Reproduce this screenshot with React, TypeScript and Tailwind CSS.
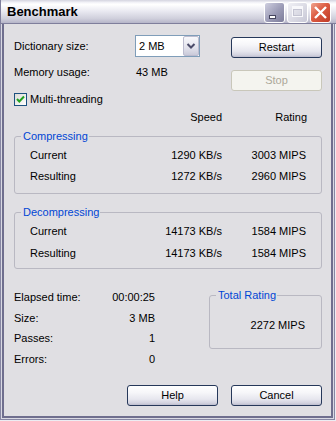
import React from "react";

interface XpButtonProps {
  label: string;
  disabled?: boolean;
  className?: string;
}

function XpButton({ label, disabled, className = "" }: XpButtonProps) {
  if (disabled) {
    return (
      <button className={"flex h-[21px] w-[91px] items-center justify-center rounded-[3px] border border-[#c9c7ba] bg-[#f4f4ef] text-[#aca899] " + className}>
        {label}
      </button>
    );
  }
  return (
    <button className={"flex h-[21px] w-[91px] items-center justify-center rounded-[3px] border border-[#26385a] bg-[linear-gradient(to_bottom,#ffffff_0%,#f6f6f9_35%,#e6e6ee_70%,#d2d2df_90%,#bcbccd_100%)] text-black " + className}>
      {label}
    </button>
  );
}

function GroupBox({ title, className = "", children }: { title: string; className?: string; children: React.ReactNode }) {
  return (
    <fieldset className={"rounded-[3px] border border-[#b9b8c2] " + className}>
      <legend className="ml-[6px] pl-[2px] pr-[1px] leading-[13px] text-[#0046d5]">{title}</legend>
      {children}
    </fieldset>
  );
}

function RateRow({ label, speed, rating }: { label: string; speed: string; rating: string }) {
  return (
    <div className="flex">
      <div className="flex-1 pl-[15px]">{label}</div>
      <div className="w-[100px] text-right">{speed}</div>
      <div className="w-[84px] text-right">{rating}</div>
    </div>
  );
}

function InfoRow({ label, value }: { label: string; value: string }) {
  return (
    <div className="flex justify-between">
      <span>{label}</span>
      <span>{value}</span>
    </div>
  );
}

function Combo() {
  return (
    <div className="flex h-[22px] w-[65px] border border-[#7f9db9] bg-white">
      <div className="flex-1 pl-[3px] pt-[4px]">2 MB</div>
      <div className="h-[20px] w-[16px] rounded-[2px] border border-[#bcbccf] bg-[linear-gradient(to_bottom,#f8f8fb,#e2e2ec_60%,#cacad9)]">
        <svg width="14" height="18" viewBox="0 0 14 18">
          <polyline points="3.5,7 7,10.5 10.5,7" fill="none" stroke="#4b4b69" strokeWidth="2" />
        </svg>
      </div>
    </div>
  );
}

function TitleButtons() {
  return (
    <div className="ml-auto mr-[5px] mt-[2px] flex gap-[2px]">
      <div className="h-[21px] w-[21px] rounded-[3px] border border-white bg-[linear-gradient(135deg,#cfcfe0,#9b9bb6_55%,#7c7c9a)]">
        <svg width="19" height="19" viewBox="0 0 19 19">
          <rect x="4.5" y="12.5" width="6" height="3" fill="#ffffff" stroke="#45455f" />
        </svg>
      </div>
      <div className="h-[21px] w-[21px] rounded-[3px] border border-white bg-[linear-gradient(135deg,#f0f0f5,#dadae4_55%,#c8c8d6)]">
        <svg width="19" height="19" viewBox="0 0 19 19">
          <rect x="4.5" y="3.5" width="10" height="10" fill="none" stroke="#f8f8fb" />
          <rect x="5" y="4" width="9" height="2" fill="#f8f8fb" />
          <rect x="5.5" y="6.5" width="8" height="6" fill="none" stroke="#c4c4d2" />
        </svg>
      </div>
      <div className="h-[21px] w-[21px] rounded-[3px] border border-white bg-[linear-gradient(135deg,#f0a48e,#dc5c42_45%,#bf3a26)]">
        <svg width="19" height="19" viewBox="0 0 19 19">
          <path d="M4 4 L15 15 M15 4 L4 15" stroke="#ffffff" strokeWidth="2.4" />
        </svg>
      </div>
    </div>
  );
}

export default function App() {
  return (
    <div className="flex h-[421px] w-[336px] flex-col bg-[#ececf2] font-['Liberation_Sans',Arial,sans-serif] text-[11px] leading-[13px] text-black">
      <div className="flex h-[24px] border-b border-l border-[#7f7e9c] bg-[linear-gradient(to_bottom,#d4d4e0_0%,#f6f6fa_12%,#ffffff_20%,#e8e8f0_50%,#d0d0dc_80%,#b6b5c9_100%)]">
        <div className="pl-[6px] pt-[4px] text-[13px] font-bold leading-[16px]">Benchmark</div>
        <TitleButtons />
      </div>

      <div className="flex flex-1 flex-col pb-px pr-px">
        <div className="flex flex-1 flex-col border-x border-b border-[#8786a3] bg-[#d9d9e3] px-px pb-px">
          <div className="flex flex-1 flex-col border-x-2 border-b-2 border-[#6f6e8e] bg-[#e0dfe3] pb-[10px] pl-[10px] pr-[9px] pt-[11px]">
            {/* settings + Restart / Stop */}
            <div className="flex">
              <div className="flex w-[217px] flex-col">
                <div className="flex h-[22px] items-center">
                  <div className="w-[121px]">Dictionary size:</div>
                  <Combo />
                </div>
                <div className="mt-[9px] flex">
                  <div className="w-[122px]">Memory usage:</div>
                  <div>43 MB</div>
                </div>
                <div className="mt-[14px] flex h-[13px] items-center">
                  <div className="h-[13px] w-[13px] border border-[#1c5180] bg-[linear-gradient(135deg,#dcdcd7,#ffffff)]">
                    <svg width="11" height="11" viewBox="0 0 11 11">
                      <polyline points="2,5 4.3,7.5 9,2.5" fill="none" stroke="#21a121" strokeWidth="2" />
                    </svg>
                  </div>
                  <span className="ml-[3px]">Multi-threading</span>
                </div>
              </div>
              <div className="flex flex-col">
                <XpButton className="mt-[2px]" label="Restart" />
                <XpButton className="mt-[12px]" label="Stop" disabled />
              </div>
            </div>

            <div className="mt-[5px] flex">
              <div className="w-[208px] text-right">Speed</div>
              <div className="w-[85px] text-right">Rating</div>
            </div>

            <GroupBox title="Compressing" className="mt-[6px]">
              <div className="flex flex-col gap-[8px] pb-[10px] pr-[15px] pt-[6px]">
                <RateRow label="Current" speed="1290 KB/s" rating="3003 MIPS" />
                <RateRow label="Resulting" speed="1272 KB/s" rating="2960 MIPS" />
              </div>
            </GroupBox>

            <GroupBox title="Decompressing" className="mt-[12px]">
              <div className="flex flex-col gap-[9px] pb-[8px] pr-[15px] pt-[6px]">
                <RateRow label="Current" speed="14173 KB/s" rating="1584 MIPS" />
                <RateRow label="Resulting" speed="14173 KB/s" rating="1584 MIPS" />
              </div>
            </GroupBox>

            <div className="flex items-start">
              <div className="mt-[22px] flex w-[141px] flex-col gap-[7.5px]">
                <InfoRow label="Elapsed time:" value="00:00:25" />
                <InfoRow label="Size:" value="3 MB" />
                <InfoRow label="Passes:" value="1" />
                <InfoRow label="Errors:" value="0" />
              </div>
              <GroupBox title="Total Rating" className="ml-auto mt-[20px] w-[113px]">
                <div className="pb-[16px] pr-[16px] pt-[17px] text-right">2272 MIPS</div>
              </GroupBox>
            </div>

            <div className="mt-auto flex justify-end gap-[13px]">
              <XpButton label="Help" />
              <XpButton label="Cancel" />
            </div>
          </div>
        </div>
      </div>
    </div>
  );
}
